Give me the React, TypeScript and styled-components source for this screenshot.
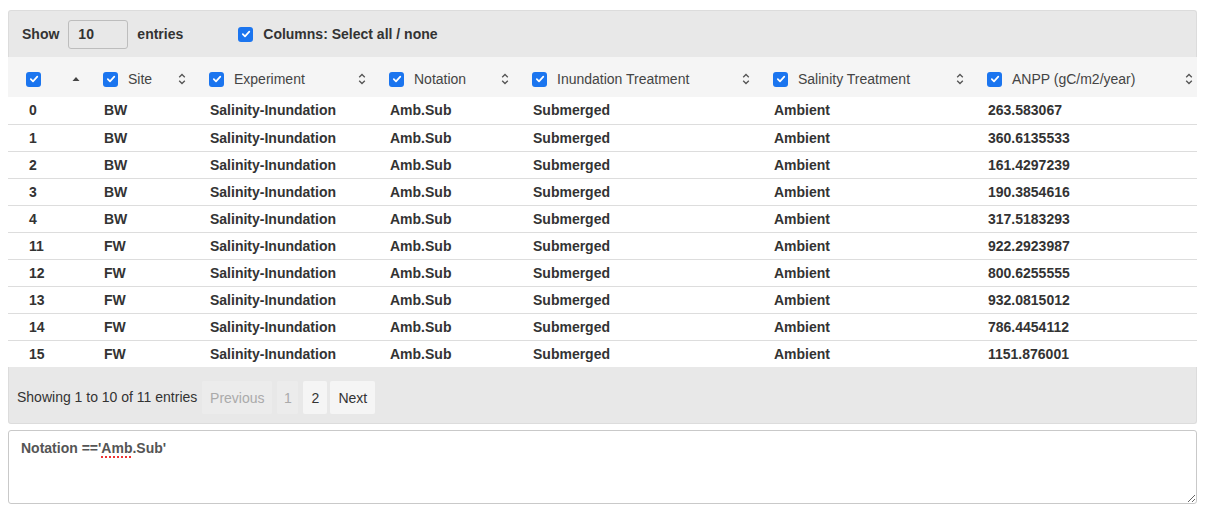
import React from "react";
import styled, { createGlobalStyle } from "styled-components";

const Global = createGlobalStyle`
  body {
    margin: 8px;
    font-family: "Liberation Sans", Arial, Helvetica, sans-serif;
    font-size: 14px;
    color: #333;
    background: #fff;
  }
`;

const Wrap = styled.div`
  width: 1189px;
  margin-top: 2px;
  display: flex;
  flex-direction: column;
`;

const TopBar = styled.div`
  height: 47px;
  background: #e8e8e8;
  border: 1px solid #dcdcdc;
  border-bottom: none;
  border-radius: 3px 3px 0 0;
  display: flex;
  align-items: center;
  padding-left: 13px;
  box-sizing: border-box;
  font-weight: bold;
  color: #333;
`;

const LenInput = styled.div`
  width: 60px;
  height: 29px;
  border: 1px solid #bdbdbd;
  border-radius: 3px;
  background: #e8e8e8;
  margin: 0 9px 0 9px;
  display: flex;
  align-items: center;
  padding-left: 9px;
  box-sizing: border-box;
  font-weight: bold;
`;

const ColsToggle = styled.label`
  display: flex;
  align-items: center;
  gap: 10px;
  margin-left: 55px;
`;

const Box = styled.span`
  width: 15px;
  height: 15px;
  border-radius: 3px;
  background: #1b75ef;
  display: inline-flex;
  align-items: center;
  justify-content: center;
  flex: none;
`;

const Check = () => (
  <Box>
    <svg width="10" height="10" viewBox="0 0 10 10">
      <path d="M1.8 5.2 L4 7.4 L8.3 2.6" fill="none" stroke="#fff" strokeWidth="1.7" strokeLinecap="round" strokeLinejoin="round" />
    </svg>
  </Box>
);

const Table = styled.table`
  width: 1189px;
  border-collapse: collapse;
  table-layout: fixed;
`;

const HeadRow = styled.tr`
  background: #f5f5f5;
  height: 40px;
`;

const Th = styled.th<{ $w: number; $pl?: number }>`
  width: ${(p) => p.$w}px;
  height: 40px;
  padding: 4px 0 0 ${(p) => p.$pl ?? 7}px;
  text-align: left;
  font-weight: normal;
  color: #444;
  box-sizing: border-box;
`;

const HeadInner = styled.div<{ $right: number }>`
  display: flex;
  align-items: center;
  padding-right: ${(p) => p.$right}px;
`;

const HeadLabel = styled.span`
  flex: 1;
  margin-left: 10px;
  white-space: nowrap;
`;

const Row = styled.tr`
  height: 27px;
  border-top: 1px solid #dddddd;
  &:first-child {
    border-top: none;
  }
`;

const Td = styled.td<{ $pl?: number }>`
  padding: 0 0 0 ${(p) => p.$pl ?? 8}px;
  font-weight: bold;
  color: #333;
  white-space: nowrap;
`;

const Footer = styled.div`
  height: 57px;
  background: #e8e8e8;
  border: 1px solid #dcdcdc;
  border-top: none;
  border-radius: 0 0 3px 3px;
  display: flex;
  align-items: center;
  padding: 3px 0 0 8px;
  box-sizing: border-box;
  color: #333;
`;

const Info = styled.span`
  margin-right: 5px;
`;

const Pages = styled.div`
  display: flex;
  margin-top: 2px;
`;

const PageBtn = styled.span<{ $state: "disabled" | "normal"; $w: number; $gap: number }>`
  height: 33px;
  width: ${(p) => p.$w}px;
  margin-right: ${(p) => p.$gap}px;
  display: inline-flex;
  align-items: center;
  justify-content: center;
  border-radius: 2px;
  background: ${(p) => (p.$state === "disabled" ? "#ececec" : "#f5f5f5")};
  color: ${(p) => (p.$state === "disabled" ? "#aaa" : "#333")};
  box-sizing: border-box;
`;

const Note = styled.div`
  margin-top: 6px;
  height: 74px;
  border: 1px solid #c9c9c9;
  border-radius: 3px;
  padding: 9px 12px;
  box-sizing: border-box;
  font-weight: bold;
  color: #555;
  resize: vertical;
  overflow: auto;
`;

const Typo = styled.span`
  text-decoration: underline dotted #e33;
  text-decoration-thickness: 2px;
  text-underline-offset: 3px;
`;

const SortBoth = () => (
  <svg width="8" height="12" viewBox="0 0 8 12">
    <path d="M1.2 4.3 L4 1.5 L6.8 4.3 M1.2 7.7 L4 10.5 L6.8 7.7" fill="none" stroke="#555" strokeWidth="1.3" />
  </svg>
);

const SortAsc = () => (
  <svg width="8" height="6" viewBox="0 0 8 6">
    <path d="M0.5 5 L4 1 L7.5 5 Z" fill="#444" />
  </svg>
);

const cols = [
  { label: "Site", w: 106 },
  { label: "Experiment", w: 180 },
  { label: "Notation", w: 143 },
  { label: "Inundation Treatment", w: 241 },
  { label: "Salinity Treatment", w: 214 },
  { label: "ANPP (gC/m2/year)", w: 217 },
];

const rows: [string, string, string][] = [
  ["0", "BW", "263.583067"],
  ["1", "BW", "360.6135533"],
  ["2", "BW", "161.4297239"],
  ["3", "BW", "190.3854616"],
  ["4", "BW", "317.5183293"],
  ["11", "FW", "922.2923987"],
  ["12", "FW", "800.6255555"],
  ["13", "FW", "932.0815012"],
  ["14", "FW", "786.4454112"],
  ["15", "FW", "1151.876001"],
];

export default function App() {
  return (
    <>
      <Global />
      <Wrap>
        <TopBar>
          Show
          <LenInput>10</LenInput>
          entries
          <ColsToggle>
            <Check />
            Columns: Select all / none
          </ColsToggle>
        </TopBar>
        <Table>
          <thead>
            <HeadRow>
              <Th $w={88} $pl={18}>
                <HeadInner $right={16}>
                  <Check />
                  <HeadLabel />
                  <SortAsc />
                </HeadInner>
              </Th>
              {cols.map((c, i) => (
                <Th key={c.label} $w={c.w}>
                  <HeadInner $right={i === cols.length - 1 ? 4 : 16}>
                    <Check />
                    <HeadLabel>{c.label}</HeadLabel>
                    <SortBoth />
                  </HeadInner>
                </Th>
              ))}
            </HeadRow>
          </thead>
          <tbody>
            {rows.map((r) => (
              <Row key={r[0]}>
                <Td $pl={21}>{r[0]}</Td>
                <Td>{r[1]}</Td>
                <Td>Salinity-Inundation</Td>
                <Td>Amb.Sub</Td>
                <Td>Submerged</Td>
                <Td>Ambient</Td>
                <Td>{r[2]}</Td>
              </Row>
            ))}
          </tbody>
        </Table>
        <Footer>
          <Info>Showing 1 to 10 of 11 entries</Info>
          <Pages>
            <PageBtn $state="disabled" $w={70} $gap={5}>Previous</PageBtn>
            <PageBtn $state="disabled" $w={21} $gap={5}>1</PageBtn>
            <PageBtn $state="normal" $w={24} $gap={3}>2</PageBtn>
            <PageBtn $state="normal" $w={45} $gap={0}>Next</PageBtn>
          </Pages>
        </Footer>
        <Note>
          Notation =='<Typo>Amb</Typo>.Sub'
        </Note>
      </Wrap>
    </>
  );
}
